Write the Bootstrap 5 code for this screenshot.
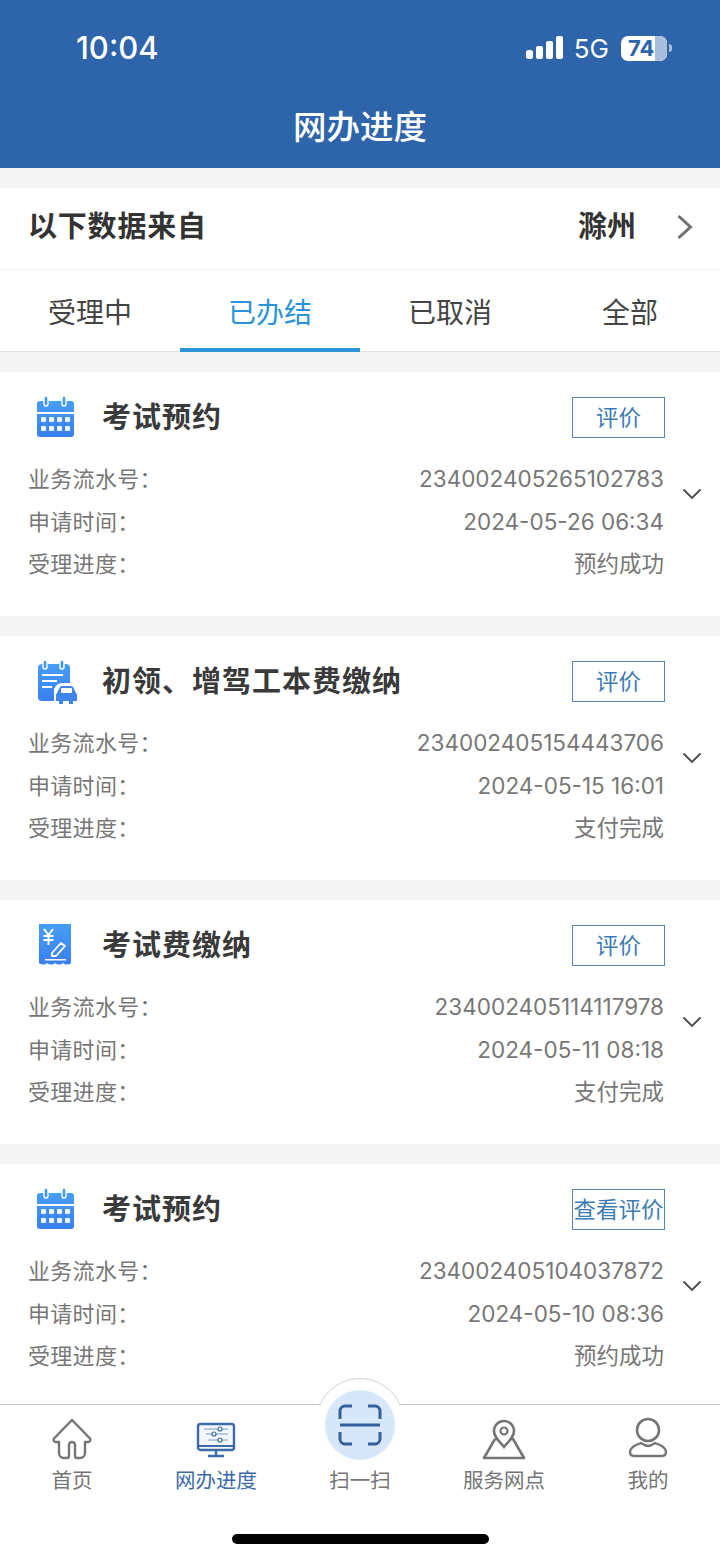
<!DOCTYPE html>
<html lang="zh-CN">
<head>
  <meta charset="UTF-8">
  <meta name="viewport" content="width=device-width, initial-scale=1">
  <title>网办进度</title>
  <link href="https://cdn.jsdelivr.net/npm/bootstrap@5.3.3/dist/css/bootstrap.min.css" rel="stylesheet">
  <style>
    html, body { height: 1558px; overflow: hidden; }
    body {
      font-family: "Inter", "Noto Sans CJK SC", sans-serif;
      background: #f5f5f5;
      color: #333;
    }
    .app-shell { height: 1558px; }
    .app-head { height: 168px; background: #2e64a9; color: #fff; }
    .status-row { height: 96px; padding: 0 48px 0 76px; }
    .clock { font-size: 31px; font-weight: 500; }
    .sig-ico { margin-right: 11px; }
    .net { font-size: 26px; }
    .batt {
      width: 46px; height: 25px; border-radius: 7px; background: #fff; color: #2e64a9;
      font-size: 22px; font-weight: 700; line-height: 25px; padding-left: 7px;
      position: relative; overflow: hidden;
    }
    .batt::after {
      content: ""; position: absolute; top: 0; right: 0; bottom: 0; width: 12px; background: #a9bedd;
    }
    .batt-cap { width: 3px; height: 8px; border-radius: 0 3px 3px 0; background: #a9bedd; margin-left: 2px; }
    .head-title { font-size: 33.500px; font-weight: 500; text-align: center; line-height: 46px; margin-top: 8px; }
    .city-row {
      height: 82px; margin-top: 20px; padding: 0 27px 3px 28px; background: #fff;
      border-bottom: 1px solid #f1f1f1;
    }
    .city-label { font-size: 29px; font-weight: 700; color: #333; letter-spacing: .8px; }
    .city-name { font-size: 29px; font-weight: 700; margin-right: 40px; }
    .tab-row { height: 82px; background: #fff; border-bottom: 1px solid #e2e2e2; }
    .tab-item {
      flex: 1 1 25%; text-align: center; font-size: 28px; line-height: 86px; color: #444; height: 82px;
    }
    .tab-item.on { color: #2a93d9; border-bottom: 4px solid #2a93d9; }
    .rec {
      height: 244px; margin-top: 20px; background: #fff; padding: 25px 0 0 28px; flex: none;
    }
    .rec-top { height: 41px; padding-right: 55px; }
    .rec-icon { width: 56px; margin-right: 18px; height: 44px; }
    .rec-title { font-size: 29px; font-weight: 700; color: #3a3a3a; line-height: 41px; letter-spacing: 1px; }
    .rate-btn {
      width: 93px; height: 41px; border: 1px solid #5584b8; color: #3f7cb4; background: #fff;
      font-size: 22.500px; line-height: 38px; text-align: center; padding: 0; border-radius: 0; white-space: nowrap;
    }
    .rec-body { margin-top: 20px; padding-right: 18px; }
    .rec-lines { width: 636px; }
    .rec-line { height: 42.500px; line-height: 42.500px; color: #777; font-size: 22px; letter-spacing: .3px; }
    .rec-line b { font-weight: 400; font-size: 22.500px; letter-spacing: 0; }
    .rec-line .cjk { font-size: 22.500px; letter-spacing: 0; }
    .rec-chev { margin: 30px 0 0 18px; }
    .rec-list { flex: 1 1 auto; overflow: hidden; min-height: 0; }
    .tabbar {
      height: 154px; flex: none; background: #fff; border-top: 1px solid #c8c8c8; position: relative;
    }
    .tab-cell { width: 144px; text-align: center; font-size: 20.500px; color: #757575; padding-top: 12px; }
    .tab-cell svg { display: block; margin: 0 auto; height: 44px; }
    .tab-cell span { display: block; line-height: 30px; margin-top: 5px; }
    .tab-cell .scan-label { margin-top: 49px; }
    .tab-cell.on { color: #3c6ba8; }
    .scan-dome {
      position: absolute; left: 316px; top: -27px; width: 88px; height: 88px; border-radius: 50%;
      background: #fff; border: 1px solid #d0d0d0; clip-path: inset(0 0 60px 0);
    }
    .scan-btn {
      position: absolute; left: 325px; top: -15px; width: 70px; height: 70px; border-radius: 50%;
      background: #d6e7f9;
    }
    .home-bar {
      position: absolute; left: 232px; top: 129px; width: 257px; height: 10px; border-radius: 5px; background: #000;
    }
  </style>
</head>
<body>
<svg width="0" height="0" class="position-absolute">
  <defs>
    <linearGradient id="blueFill" x1="0" y1="0" x2="0" y2="1">
      <stop offset="0" stop-color="#479ef6"/><stop offset="1" stop-color="#3a7ff0"/>
    </linearGradient>
    <symbol id="icoCal" viewBox="0 0 56 44">
      <rect x="9" y="5" width="37" height="36" rx="3" fill="url(#blueFill)"/>
      <rect x="9" y="16" width="37" height="2" fill="#fff"/>
      <rect x="16" y="0" width="4" height="10" rx="2" fill="#3f9cf6" stroke="#fff" stroke-width="1.400"/>
      <rect x="34" y="0" width="4" height="10" rx="2" fill="#3f9cf6" stroke="#fff" stroke-width="1.400"/>
      <g fill="#fff" opacity=".9">
        <rect x="13" y="21" width="5" height="5" rx="1"/><rect x="21" y="21" width="5" height="5" rx="1"/><rect x="29" y="21" width="5" height="5" rx="1"/><rect x="37" y="21" width="5" height="5" rx="1"/>
        <rect x="13" y="30" width="5" height="5" rx="1"/><rect x="21" y="30" width="5" height="5" rx="1"/><rect x="29" y="30" width="5" height="5" rx="1"/><rect x="37" y="30" width="5" height="5" rx="1"/>
      </g>
    </symbol>
    <symbol id="icoCar" viewBox="0 0 56 44">
      <rect x="10" y="4" width="32" height="37" rx="4" fill="url(#blueFill)"/>
      <rect x="15" y="0" width="4" height="9" rx="2" fill="#3f9cf6" stroke="#fff" stroke-width="1.400"/>
      <rect x="32" y="0" width="4" height="9" rx="2" fill="#3f9cf6" stroke="#fff" stroke-width="1.400"/>
      <g fill="#fff"><rect x="14" y="14" width="21" height="2"/><rect x="14" y="20" width="15" height="2"/><rect x="14" y="26" width="10" height="2"/></g>
      <path d="M26 44v-12a8 8 0 0 1 8-9h8a8 8 0 0 1 8 9v12z" fill="#fff"/>
      <path d="M29 33l3-6a3 3 0 0 1 2-1h9a3 3 0 0 1 2 1l3 6a3 3 0 0 1 1 2v6h-4v3h-4v-3h-6v3h-4v-3h-3v-6a3 3 0 0 1 1-2z" fill="#3f83ee"/>
      <rect x="33" y="28" width="11" height="5" rx="1" fill="#fff"/>
    </symbol>
    <symbol id="icoFee" viewBox="0 0 56 44">
      <path d="M11 0h32v39c-2.500 2-5.500 2-8 0-2.500 2-5.500 2-8 0-2.500 2-5.500 2-8 0-2.500 2-5.500 2-8 0z" fill="url(#blueFill)"/>
      <path d="M16 5l4.500 6 4.500-6M20.500 11v10M15.500 12h10M15.500 16h10" fill="none" stroke="#fff" stroke-width="2"/>
      <path d="M24 29l9-10 4 3-9 10h-4z" fill="none" stroke="#fff" stroke-width="1.800" stroke-linejoin="round"/>
      <rect x="17" y="35" width="21" height="1.500" fill="#fff"/>
    </symbol>
    <symbol id="icoChev" viewBox="0 0 20 12">
      <path d="M1.500 1.500l8.500 8.500 8.500-8.500" fill="none" stroke="#4a4a4a" stroke-width="1.800"/>
    </symbol>
  </defs>
</svg>

<div class="app-shell d-flex flex-column">
  <header class="app-head flex-shrink-0">
    <div class="status-row d-flex align-items-center justify-content-between">
      <span class="clock">10:04</span>
      <div class="d-flex align-items-center">
        <svg width="37" height="24" viewBox="0 0 37 24" class="sig-ico"><g fill="#fff"><rect x="0" y="14" width="7" height="9" rx="2.500"/><rect x="10" y="10" width="7" height="13" rx="2"/><rect x="20" y="5" width="7" height="18" rx="2"/><rect x="30" y="0" width="7" height="23" rx="2"/></g></svg>
        <span class="net me-2">5G</span>
        <div class="batt ms-1">74</div>
        <div class="batt-cap"></div>
      </div>
    </div>
    <div class="head-title">网办进度</div>
  </header>

  <div class="city-row d-flex align-items-center justify-content-between flex-shrink-0">
    <span class="city-label">以下数据来自</span>
    <div class="d-flex align-items-center">
      <span class="city-name">滁州</span>
      <svg width="17" height="26" viewBox="0 0 17 26"><path d="M2.500 2l12 11-12 11" fill="none" stroke="#6f6f6f" stroke-width="3"/></svg>
    </div>
  </div>

  <div class="tab-row d-flex flex-shrink-0">
    <div class="tab-item">受理中</div>
    <div class="tab-item on">已办结</div>
    <div class="tab-item">已取消</div>
    <div class="tab-item">全部</div>
  </div>

  <div class="rec-list" id="recList"></div>

  <nav class="tabbar d-flex">
    <div class="scan-dome"></div>
    <div class="tab-cell">
      <svg width="42" height="44" viewBox="0 0 42 44"><path d="M21 3L3 21.500c-1 1.500 0 3.500 2 3.500h3v11a5 5 0 0 0 5 5h3a2 2 0 0 0 2-2V28a3 3 0 0 1 6 0v11a2 2 0 0 0 2 2h3a5 5 0 0 0 5-5V25h3c2 0 3-2 2-3.500z" fill="none" stroke="#757575" stroke-width="2.400" stroke-linejoin="round"/></svg>
      <span>首页</span>
    </div>
    <div class="tab-cell on">
      <svg width="40" height="44" viewBox="0 0 40 44"><rect x="2" y="7" width="36" height="26" rx="2.500" fill="#f3f7fc" stroke="#3c6ba8" stroke-width="2.400"/><path d="M2 29h36" stroke="#3c6ba8" stroke-width="2"/><path d="M20 33v5M12 39h16" stroke="#3c6ba8" stroke-width="2.400"/><path d="M8 12h24M10 17h22M12 23h20" stroke="#7e9dc6" stroke-width="1.200"/><g fill="#f3f7fc" stroke="#3c6ba8" stroke-width="1.200"><circle cx="24" cy="12" r="2"/><circle cx="18" cy="17" r="2"/><circle cx="24" cy="23" r="2"/></g></svg>
      <span>网办进度</span>
    </div>
    <div class="tab-cell">
      <span class="scan-label">扫一扫</span>
    </div>
    <div class="tab-cell">
      <svg width="44" height="44" viewBox="0 0 44 44"><path d="M13 22L2 41h40L31 22h-6M13 22h6" fill="none" stroke="#757575" stroke-width="2.600" stroke-linejoin="round"/><path d="M22 30c-5-6-10-10-10-16a10 10 0 0 1 20 0c0 6-5 10-10 16z" fill="#fff" stroke="#757575" stroke-width="2.600"/><circle cx="22" cy="14" r="3.500" fill="none" stroke="#757575" stroke-width="2.200"/></svg>
      <span>服务网点</span>
    </div>
    <div class="tab-cell">
      <svg width="40" height="44" viewBox="0 0 40 44"><circle cx="20" cy="13" r="11" fill="none" stroke="#757575" stroke-width="2.600"/><path d="M13 26c-3 1-11 3-11 9 0 3 2 4 4 4h28c2 0 4-1 4-4 0-6-8-8-11-9-2 1-4 3-7 3s-5-2-7-3z" fill="none" stroke="#757575" stroke-width="2.400" stroke-linejoin="round"/></svg>
      <span>我的</span>
    </div>
    <div class="scan-btn d-flex align-items-center justify-content-center">
      <svg width="44" height="44" viewBox="0 0 44 44"><path d="M14 3H7a5 5 0 0 0-5 5v8M30 3h7a5 5 0 0 1 5 5v8M14 41H7a5 5 0 0 1-5-5v-7M30 41h7a5 5 0 0 0 5-5v-7" fill="none" stroke="#33619f" stroke-width="3"/><path d="M2 22h40" stroke="#33619f" stroke-width="3"/></svg>
    </div>
    <div class="home-bar"></div>
  </nav>
</div>

<script>
  const records = [
    { icon: 'icoCal', title: '考试预约', btn: '评价', no: '234002405265102783', time: '2024-05-26 06:34', state: '预约成功' },
    { icon: 'icoCar', title: '初领、增驾工本费缴纳', btn: '评价', no: '234002405154443706', time: '2024-05-15 16:01', state: '支付完成' },
    { icon: 'icoFee', title: '考试费缴纳', btn: '评价', no: '234002405114117978', time: '2024-05-11 08:18', state: '支付完成' },
    { icon: 'icoCal', title: '考试预约', btn: '查看评价', no: '234002405104037872', time: '2024-05-10 08:36', state: '预约成功' }
  ];
  document.getElementById('recList').innerHTML = records.map(r => `
    <section class="rec">
      <div class="rec-top d-flex align-items-center">
        <svg class="rec-icon"><use href="#${r.icon}"/></svg>
        <div class="rec-title flex-grow-1">${r.title}</div>
        <button type="button" class="btn rate-btn">${r.btn}</button>
      </div>
      <div class="rec-body d-flex">
        <div class="rec-lines">
          <div class="rec-line d-flex justify-content-between"><span>业务流水号：</span><b>${r.no}</b></div>
          <div class="rec-line d-flex justify-content-between"><span>申请时间：</span><b>${r.time}</b></div>
          <div class="rec-line d-flex justify-content-between"><span>受理进度：</span><span class="cjk">${r.state}</span></div>
        </div>
        <svg class="rec-chev" width="20" height="12"><use href="#icoChev"/></svg>
      </div>
    </section>`).join('');
</script>
<script src="https://cdn.jsdelivr.net/npm/bootstrap@5.3.3/dist/js/bootstrap.bundle.min.js"></script>
</body>
</html>
